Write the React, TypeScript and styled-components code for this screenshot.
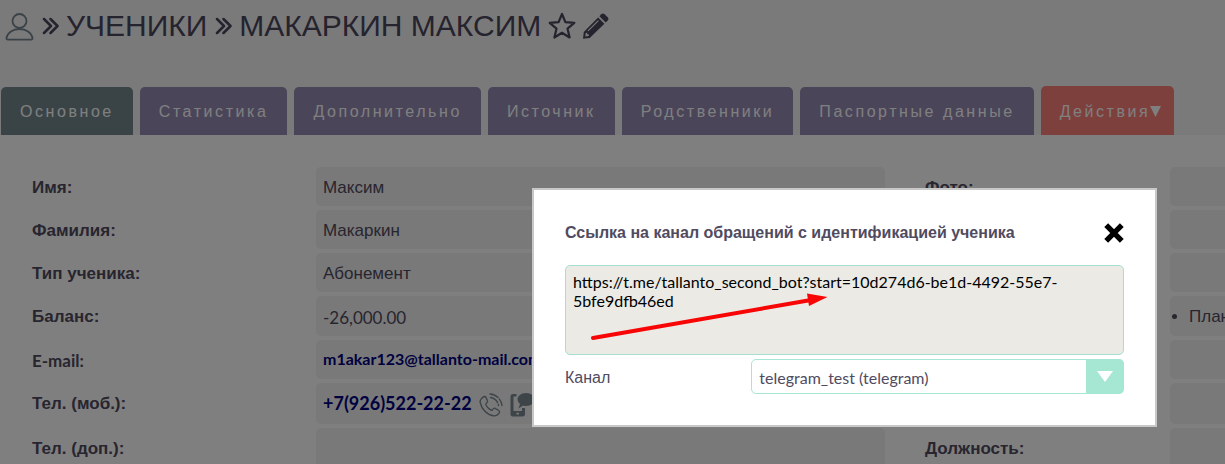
import React from "react";
import styled, { createGlobalStyle } from "styled-components";

const GlobalStyle = createGlobalStyle`
  * { box-sizing: border-box; }
  html, body { margin: 0; height: 100%; }
  body {
    background: #fff;
    color: #504b5f;
    font-family: "Liberation Sans", Arial, sans-serif;
    font-size: 17px;
  }
  #root { height: 100%; }
`;

const Page = styled.div`
  position: relative;
  height: 100vh;
  overflow: hidden;
`;

const Header = styled.header`
  background: #f4f4f4;
  padding-top: 7px;
`;

const Title = styled.h1`
  display: flex;
  align-items: center;
  gap: 7px;
  margin: 0;
  padding-left: 5px;
  height: 38px;
  font-size: 30px;
  font-weight: 400;
  line-height: 38px;
  color: #4b465c;
  white-space: nowrap;
`;

const IconButton = styled.button`
  display: flex;
  margin: 0;
  padding: 0;
  border: 0;
  background: none;
  color: inherit;
`;

const Tabs = styled.nav`
  display: flex;
  align-items: flex-end;
  gap: 7px;
  margin-top: 41px;
  padding-left: 1px;
`;

const Tab = styled.button<{ $tone?: string; $menu?: boolean }>`
  display: flex;
  align-items: center;
  flex: none;
  height: ${(p) => (p.$menu ? 49 : 48)}px;
  margin: 0;
  padding: 2px ${(p) => (p.$menu ? 12 : 19)}px 0 19px;
  border: 0;
  border-radius: 5px 5px 0 0;
  background: ${(p) => p.$tone ?? "#958ab3"};
  color: #fff;
  font-family: inherit;
  font-size: 16px;
  letter-spacing: 0.16em;
  white-space: nowrap;
`;

const Form = styled.main`
  display: grid;
  grid-template-columns: 284px minmax(0, 1fr) 40px 245px 55px;
  row-gap: 4px;
  padding: 32px 0 0 32px;
`;

const Label = styled.div<{ $second?: boolean; $latin?: boolean }>`
  grid-column: ${(p) => (p.$second ? 4 : 1)};
  padding-top: 2px;
  font-family: ${(p) => (p.$latin ? "Lato, sans-serif" : "inherit")};
  font-weight: 700;
  line-height: 37px;
  white-space: nowrap;
`;

const Field = styled.div<{ $second?: boolean; $height: number }>`
  grid-column: ${(p) => (p.$second ? 5 : 2)};
  display: flex;
  align-items: center;
  height: ${(p) => p.$height}px;
  padding: 2px 0 0 ${(p) => (p.$second ? 0 : 7)}px;
  border-radius: ${(p) => (p.$second ? "5px 0 0 5px" : "5px")};
  background: #f2f2f2;
  overflow: hidden;
  white-space: nowrap;
`;

const Amount = styled.span`
  font-family: Lato, sans-serif;
`;

const List = styled.ul`
  margin: 0;
  padding-left: 19px;
`;

const Contact = styled.a<{ $size: number }>`
  padding-bottom: 4px;
  color: #000080;
  font-family: Lato, sans-serif;
  font-size: ${(p) => p.$size}px;
  font-weight: 700;
  text-decoration: none;
`;

const ContactIcon = styled.button`
  display: flex;
  margin: 1px 0 0 7px;
  padding: 0;
  border: 0;
  background: none;
  color: #7c8a92;
`;

const Overlay = styled.div`
  position: absolute;
  inset: 0;
  background: rgba(0, 0, 0, 0.5);
`;

const Dialog = styled.section`
  position: absolute;
  top: 188px;
  left: 532px;
  right: 68px;
  padding: 31px;
  border: 2px solid #c8c8c8;
  background: #fff;
`;

const DialogHead = styled.div`
  display: flex;
  align-items: center;
  justify-content: space-between;
  height: 24px;
  margin-bottom: 20px;
`;

const DialogTitle = styled.h2`
  margin: 0;
  font-size: 16px;
  font-weight: 700;
  line-height: 24px;
  white-space: nowrap;
`;

const Close = styled.button`
  display: flex;
  padding: 0;
  border: 0;
  background: none;
`;

const LinkArea = styled.div`
  position: relative;
`;

const LinkText = styled.textarea`
  display: block;
  width: 100%;
  height: 90px;
  padding: 6px 7px;
  border: 1px solid #a6dfd0;
  border-radius: 5px;
  background: #ebeae4;
  color: #000;
  font-family: Lato, sans-serif;
  font-size: 16px;
  line-height: 19px;
  resize: none;
  overflow: hidden;
`;

const Pointer = styled.svg`
  position: absolute;
  left: 24px;
  top: 26px;
  pointer-events: none;
`;

const ChannelRow = styled.div`
  display: grid;
  grid-template-columns: 1fr 2fr;
  align-items: center;
  margin-top: 4px;
`;

const ChannelLabel = styled.label`
  padding-top: 2px;
  font-size: 16px;
`;

const SelectBox = styled.div`
  position: relative;
`;

const Select = styled.select`
  display: block;
  appearance: none;
  width: 100%;
  height: 35px;
  padding: 2px 40px 0 7px;
  border: 1px solid #a6e7d4;
  border-radius: 5px;
  background: #fff;
  color: #504b5f;
  font-family: Lato, sans-serif;
  font-size: 16px;
`;

const SelectArrow = styled.span`
  position: absolute;
  inset: 0 0 0 auto;
  display: flex;
  align-items: center;
  justify-content: center;
  width: 38px;
  border-radius: 0 5px 5px 0;
  background: #a6e7d4;
  pointer-events: none;
`;

const UserIcon = () => (
  <svg width="29" height="29" viewBox="0 0 29 29" fill="none" stroke="#74848e" strokeWidth="1.8">
    <circle cx="14.5" cy="9" r="7" />
    <path d="M1.5 26C2.500 20.500 8 17 14.500 17S26.500 20.500 27.500 26Q27.700 27.700 26 27.700H3Q1.200 27.700 1.500 26Z" />
  </svg>
);

const CrumbIcon = () => (
  <svg width="18" height="18" viewBox="0 0 18 18" fill="none" stroke="currentColor" strokeWidth="2.5" strokeLinecap="round" strokeLinejoin="round">
    <path d="M3 2L10 9 3 16M9.500 2L16.500 9 9.500 16" />
  </svg>
);

const StarIcon = () => (
  <svg width="28" height="28" viewBox="0 0 28 28" fill="none" stroke="currentColor" strokeWidth="2.2" strokeLinejoin="round">
    <path d="M14 2L17.400 10.200 26.300 10.900 19.500 16.600 21.600 25.500 14 20.800 6.400 25.500 8.500 16.600 1.700 10.900 10.600 10.200Z" />
  </svg>
);

const PencilIcon = () => (
  <svg width="26" height="26" viewBox="0 0 26 26" fill="currentColor">
    <path d="M18.300 1.200Q19.900-.300 21.500 1.200L24.700 4.300Q26.200 5.900 24.700 7.400L22.700 9.400 16.400 3.200Z" />
    <path fillRule="evenodd" d="M15.100 4.500L21.400 10.700 6.700 24.900 0 25.700.8 18.900ZM2.700 20L2.300 23.400 5.800 23 6 21.500 4.300 21.300 4.200 19.800ZM15 7.200L4.600 17.400 5.400 18.200 15.800 8Z" />
  </svg>
);

const MenuIcon = () => (
  <svg width="12" height="12" viewBox="0 0 12 12" fill="currentColor">
    <path d="M0 0H11L5.500 11Z" />
  </svg>
);

const PhoneIcon = () => (
  <svg width="24" height="24" viewBox="0 0 24 24" fill="none" stroke="currentColor" strokeWidth="1.4" strokeLinecap="round" strokeLinejoin="round">
    <path d="M5.500 3.500C3 4.500.8 7 1.200 9.500 2.500 16 8 21.800 14.500 22.800 17 23 19.500 21.500 20.500 19.300 20.800 18.500 20.400 17.900 19.800 17.500L16.200 15.300C15.200 14.800 14.500 15.300 13.400 16.900 12.800 17.500 12 17.200 11.200 16.700 9.300 15.500 8 14 6.900 12 6.500 11 6.800 10.600 7.500 10.200 8.800 9.300 9 8.700 8.400 7.600L6.900 4.200C6.500 3.500 6.100 3.300 5.500 3.500Z" />
    <path d="M11 1C17 1.200 22.500 6.500 23 12.500M11.500 4.500C15.500 5 19 8.500 19.500 12.500" strokeDasharray="9 2" />
  </svg>
);

const MessageIcon = () => (
  <svg width="26" height="24" viewBox="0 0 26 24" fill="currentColor">
    <path fillRule="evenodd" d="M3 1H6.500V3.500H3.500V18H12V15H15V21Q15 23.500 12.500 23.500H3Q.5 23.500.5 21V3.500Q.5 1 3 1ZM6.500 19.800V21.500H9V19.800Z" />
    <path d="M16 0C21 0 25 3 25 6.500S21 13 16 13Q14.500 13 13.200 12.500L8.500 15.500 10 11Q7.500 9 7.500 6.500C7.500 3 11 0 16 0Z" />
  </svg>
);

const rows = [
  { label: "Имя:", second: "Фото:", height: 39, value: "Максим" },
  { label: "Фамилия:", height: 39, value: "Макаркин" },
  { label: "Тип ученика:", height: 39, value: "Абонемент" },
  { label: "Баланс:", height: 40, amount: "-26,000.00", list: "План" },
  { label: "E-mail:", latin: true, height: 39, email: "m1akar123@tallanto-mail.com" },
  { label: "Тел. (моб.):", height: 41, phone: "+7(926)522-22-22" },
  { label: "Тел. (доп.):", second: "Должность:", height: 41 },
];

const tabs = ["Статистика", "Дополнительно", "Источник", "Родственники", "Паспортные данные"];

export default function App() {
  return (
    <Page>
      <GlobalStyle />
      <Header>
        <Title>
          <UserIcon />
          <CrumbIcon />
          <span>УЧЕНИКИ</span>
          <CrumbIcon />
          <span>МАКАРКИН МАКСИМ</span>
          <IconButton aria-label="В избранное"><StarIcon /></IconButton>
          <IconButton aria-label="Редактировать"><PencilIcon /></IconButton>
        </Title>
        <Tabs>
          <Tab $tone="#74888f">Основное</Tab>
          {tabs.map((t) => <Tab key={t}>{t}</Tab>)}
          <Tab $tone="#fc8078" $menu>Действия<MenuIcon /></Tab>
        </Tabs>
      </Header>
      <Form>
        {rows.map((r) => (
          <React.Fragment key={r.label}>
            <Label $latin={r.latin}>{r.label}</Label>
            <Field $height={r.height}>
              {r.value}
              {r.amount && <Amount>{r.amount}</Amount>}
              {r.email && <Contact href={"mailto:" + r.email} $size={16}>{r.email}</Contact>}
              {r.phone && (
                <>
                  <Contact href="tel:+79265222222" $size={18}>{r.phone}</Contact>
                  <ContactIcon aria-label="Позвонить"><PhoneIcon /></ContactIcon>
                  <ContactIcon aria-label="Написать"><MessageIcon /></ContactIcon>
                </>
              )}
            </Field>
            <Label $second>{r.second}</Label>
            <Field $second $height={r.height}>
              {r.list && <List><li>{r.list}</li></List>}
            </Field>
          </React.Fragment>
        ))}
      </Form>
      <Overlay />
      <Dialog role="dialog" aria-labelledby="dialog-title">
        <DialogHead>
          <DialogTitle id="dialog-title">Ссылка на канал обращений с идентификацией ученика</DialogTitle>
          <Close aria-label="Закрыть">
            <svg width="20" height="20" viewBox="0 0 20 20" stroke="#000" strokeWidth="5.400">
              <path d="M2.200 2.200L17.800 17.800M17.800 2.200L2.200 17.800" />
            </svg>
          </Close>
        </DialogHead>
        <LinkArea>
          <LinkText
            readOnly
            aria-label="Ссылка"
            value="https://t.me/tallanto_second_bot?start=10d274d6-be1d-4492-55e7-5bfe9dfb46ed"
          />
          <Pointer width="242" height="52" viewBox="0 0 242 52">
            <path d="M4 47L222 9" stroke="#f80505" strokeWidth="4" strokeLinecap="round" />
            <path d="M218 2.500L238.500 6 220 15Z" fill="#f80505" />
          </Pointer>
        </LinkArea>
        <ChannelRow>
          <ChannelLabel htmlFor="channel">Канал</ChannelLabel>
          <SelectBox>
            <Select id="channel">
              <option>telegram_test (telegram)</option>
            </Select>
            <SelectArrow>
              <svg width="16" height="11" viewBox="0 0 16 11"><path d="M0 0H16L8 11Z" fill="#fff" /></svg>
            </SelectArrow>
          </SelectBox>
        </ChannelRow>
      </Dialog>
    </Page>
  );
}
